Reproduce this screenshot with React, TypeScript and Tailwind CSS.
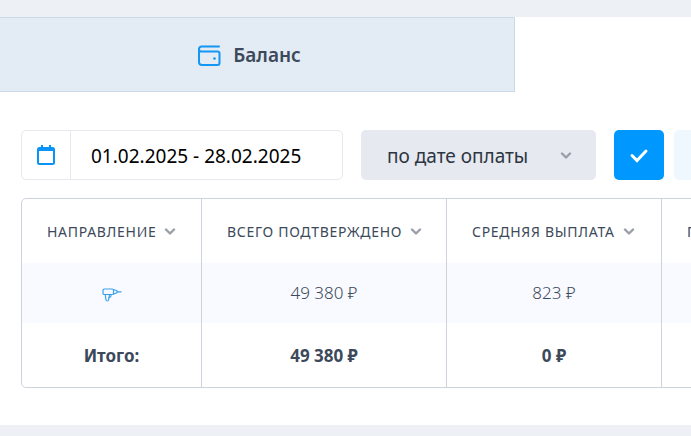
import type { ReactNode } from "react";

type Column = { title: string; value: ReactNode; total: string; width: string };

function WalletIcon() {
  return (
    <svg className="size-6 shrink-0 text-[#1496f3]" viewBox="0 0 24 24" fill="none" stroke="currentColor" strokeWidth="2" strokeLinecap="round" strokeLinejoin="round" aria-hidden="true">
      <path d="M22 2.500H4.500A2.500 2.500 0 0 0 2 5v13a3 3 0 0 0 3 3h15.500a2 2 0 0 0 2-2V9.500a2 2 0 0 0-2-2h-16A2.500 2.500 0 0 1 2 5" />
      <circle cx="17.500" cy="14.500" r="1.300" fill="currentColor" stroke="none" />
    </svg>
  );
}

function CalendarIcon() {
  return (
    <svg className="h-5 w-[18px]" viewBox="0 0 18 20" fill="none" aria-hidden="true">
      <rect x="1" y="3" width="16" height="16" rx="1.500" stroke="#0b93f6" strokeWidth="2" />
      <path d="M1 3h16v3H1zM4 0h2v4H4zM12 0h2v4h-2z" fill="#0b93f6" />
    </svg>
  );
}

function Chevron({ className = "" }: { className?: string }) {
  return (
    <svg className={`h-2 w-3 shrink-0 text-[#9a9ea6] ${className}`} viewBox="0 0 12 8" fill="none" stroke="currentColor" strokeWidth="2.400" strokeLinecap="round" strokeLinejoin="round" aria-hidden="true">
      <path d="M2 1.500l4 4 4-4" />
    </svg>
  );
}

function CheckIcon() {
  return (
    <svg className="h-4 w-5" viewBox="0 0 20 16" fill="none" stroke="#fff" strokeWidth="3" strokeLinecap="round" aria-hidden="true">
      <path d="M3 8.500l5 5L17 4" />
    </svg>
  );
}

function DrillIcon() {
  return (
    <svg className="mx-auto mt-1 h-[14px] w-5" viewBox="0 0 20 14" fill="none" stroke="#3b9fe6" strokeWidth="1.200" strokeLinejoin="round" role="img" aria-label="Дрель">
      <rect x="1" y="1" width="10.500" height="5.500" rx="1.200" />
      <path d="M11.500 1.500l3.500 1.300v2l-3.500 1.300M15 3.800H19.500M3.200 6.500l.8 5.500q.2 1 1.300 1t1.300-1l.8-5.500M7 10q2.200-.8 2.300-3.500" />
    </svg>
  );
}

const columns: Column[] = [
  { title: "НАПРАВЛЕНИЕ", value: <DrillIcon />, total: "Итого:", width: "w-[180px]" },
  { title: "ВСЕГО ПОДТВЕРЖДЕНО", value: "49 380 ₽", total: "49 380 ₽", width: "w-[245px]" },
  { title: "СРЕДНЯЯ ВЫПЛАТА", value: "823 ₽", total: "0 ₽", width: "w-[215px]" },
  { title: "П", value: "", total: "", width: "w-[180px]" },
];

export default function App() {
  return (
    <div className="min-h-screen overflow-hidden bg-[#edf1f5] pt-[17px] font-['Noto_Sans','Open_Sans',sans-serif] text-[#3c495a]">
      <main className="bg-white pb-[37px]">
        <nav className="flex">
          <button type="button" className="flex h-[75px] w-[515px] items-center justify-center gap-3 border border-l-0 border-[#cbd8e8] bg-[#e3ebf5] pt-0.5 pr-4 text-[19px] font-semibold">
            <WalletIcon />
            Баланс
          </button>
        </nav>

        <form className="mt-[38px] flex gap-[18px] pl-[21px]">
          <label className="flex h-[50px] w-[322px] shrink-0 rounded-[5px] border border-[#e6e9ee]">
            <span className="flex w-[49px] shrink-0 items-center justify-center border-r border-[#e6e9ee]">
              <CalendarIcon />
            </span>
            <input type="text" aria-label="Период" defaultValue="01.02.2025 - 28.02.2025" className="w-full min-w-0 bg-transparent px-5 pt-0.5 text-[19px] text-black outline-none" />
          </label>
          <div className="relative h-[50px] w-[235px] shrink-0">
            <select aria-label="Тип даты" className="size-full appearance-none rounded-[5px] bg-[#e6e9f0] pt-0.5 pl-[26px] text-[19px] text-[#2d3540] outline-none">
              <option>по дате оплаты</option>
            </select>
            <Chevron className="pointer-events-none absolute top-[22px] right-6" />
          </div>
          <div className="flex gap-2.5">
            <button type="submit" aria-label="Применить" className="flex size-[50px] shrink-0 items-center justify-center rounded-[5px] bg-[#0098ff]">
              <CheckIcon />
            </button>
            <button type="reset" aria-label="Сбросить" className="size-[50px] shrink-0 rounded-[5px] bg-[#eff7ff]" />
          </div>
        </form>

        <div className="mt-[18px] overflow-hidden pl-[21px]">
          <div className="w-max rounded-[5px] border border-[#cdd3dd]">
            <table className="table-fixed border-separate border-spacing-0 text-center">
              <thead>
                <tr className="h-16">
                  {columns.map((c) => (
                    <th key={c.title} className={`${c.width} border-r border-[#cdd3dd] p-0 pt-0.5 pl-[25px] font-normal last:border-r-0`}>
                      <button type="button" className="flex items-center gap-2 text-sm tracking-wider whitespace-nowrap">
                        {c.title}
                        <Chevron />
                      </button>
                    </th>
                  ))}
                </tr>
              </thead>
              <tbody>
                <tr className="h-[60px] bg-[#f8faff] text-[17px] font-light">
                  {columns.map((c) => (
                    <td key={c.title} className="border-r border-[#cdd3dd] p-0 last:border-r-0">{c.value}</td>
                  ))}
                </tr>
              </tbody>
              <tfoot>
                <tr className="h-16 text-[17px] font-bold">
                  {columns.map((c) => (
                    <td key={c.title} className="border-r border-[#cdd3dd] p-0 pt-0.5 last:border-r-0">{c.total}</td>
                  ))}
                </tr>
              </tfoot>
            </table>
          </div>
        </div>
      </main>
    </div>
  );
}
